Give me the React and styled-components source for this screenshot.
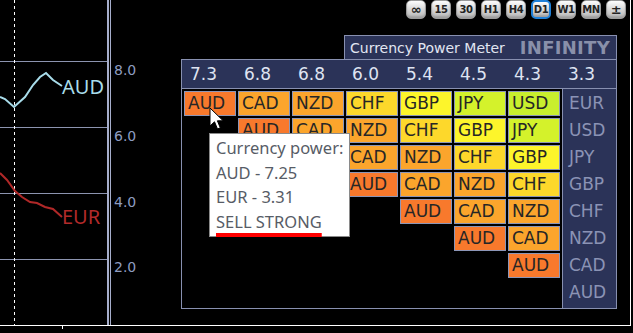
import React from "react";
import styled, { createGlobalStyle } from "styled-components";

const GlobalStyle = createGlobalStyle`
  html, body {
    margin: 0;
    padding: 0;
    background: #000;
  }
  #root {
    width: 633px;
    height: 333px;
  }
`;

const columns = ["7.3", "6.8", "6.8", "6.0", "5.4", "4.5", "4.3", "3.3"];
const rowLabels = ["EUR", "USD", "JPY", "GBP", "CHF", "NZD", "CAD", "AUD"];
const diagonal = ["AUD", "CAD", "NZD", "CHF", "GBP", "JPY", "USD"];
const cellColors = {
    AUD: "#f8792c",
    CAD: "#fba52c",
    NZD: "#fba52c",
    CHF: "#fdd82b",
    GBP: "#fdf52b",
    JPY: "#d4f22b",
    USD: "#c9ef2e",
};
const timeframes = ["∞", "15", "30", "H1", "H4", "D1", "W1", "MN", "±"];
const ticks = ["8.0", "6.0", "4.0", "2.0"];

function App() {
    return (
        <Root>
            <GlobalStyle />
            <Frame>
                <ChartPane>
                    <svg width="107" height="325">
                        {[61, 127, 193, 259].map((y) => (
                            <line key={y} x1="0" y1={y + 0.5} x2="107" y2={y + 0.5} stroke="#8c94b0" strokeWidth="1" />
                        ))}
                        <line x1="14.5" y1="0" x2="14.5" y2="325" stroke="#fff" strokeWidth="1" strokeDasharray="3 3" />
                        <polyline
                            points="0,97 5,99 14,107 25,97 33,85 40,77 46,73 53,80 62,86"
                            fill="none"
                            stroke="#a8dcea"
                            strokeWidth="2"
                        />
                        <polyline
                            points="0,173 7,180 15,191 22,197 30,202 37,203 45,207 53,209 62,217"
                            fill="none"
                            stroke="#b02828"
                            strokeWidth="2"
                        />
                    </svg>
                    <SeriesLabel $top={74} $color="#a8dcea">AUD</SeriesLabel>
                    <SeriesLabel $top={204} $color="#b22a2a">EUR</SeriesLabel>
                </ChartPane>
                <AxisRule />
                <AxisScale>
                    {ticks.map((t) => (
                        <Tick key={t}>{t}</Tick>
                    ))}
                </AxisScale>
                <MeterArea>
                    <TitleBar>
                        <span>Currency Power Meter</span>
                        <Brand>INFINITY</Brand>
                    </TitleBar>
                    <Panel>
                        <HeaderRow>
                            {columns.map((v, i) => (
                                <HeaderCell key={i}>{v}</HeaderCell>
                            ))}
                        </HeaderRow>
                        <Body>
                            <CellGrid>
                                {rowLabels.map((row, r) =>
                                    diagonal.map((_, c) => {
                                        const name = c >= r ? diagonal[c - r] : null;
                                        return name ? (
                                            <Cell key={`${r}-${c}`} $bg={cellColors[name]}>
                                                {name}
                                            </Cell>
                                        ) : (
                                            <EmptyCell key={`${r}-${c}`} />
                                        );
                                    })
                                )}
                            </CellGrid>
                            <LabelColumn>
                                {rowLabels.map((l) => (
                                    <RowLabel key={l}>{l}</RowLabel>
                                ))}
                            </LabelColumn>
                        </Body>
                    </Panel>
                </MeterArea>
            </Frame>
            <BottomTick />

            <Toolbar>
                {timeframes.map((t) => (
                    <TfButton key={t} $active={t === "D1"} $glyph={t === "∞" || t === "±"}>
                        {t}
                    </TfButton>
                ))}
            </Toolbar>

            <Tooltip>
                <TipLine>Currency power:</TipLine>
                <TipLine>AUD - 7.25</TipLine>
                <TipLine>EUR - 3.31</TipLine>
                <TipLine>
                    <Signal>SELL STRONG</Signal>
                </TipLine>
            </Tooltip>

            <Cursor width="16" height="24" viewBox="0 0 16 24">
                <path
                    d="M1,1 L1,19 L5.5,14.8 L8.5,22 L11.3,20.8 L8.4,13.8 L14.2,13.8 Z"
                    fill="#fff"
                    stroke="#000"
                    strokeWidth="1"
                />
            </Cursor>
        </Root>
    );
}

const Root = styled.div`
    position: relative;
    width: 633px;
    height: 333px;
    background: #000;
    overflow: hidden;
    font-family: "DejaVu Sans", Verdana, sans-serif;
`;

const Frame = styled.div`
    display: flex;
    width: 630px;
    height: 325px;
    border-right: 1px solid #fff;
    border-bottom: 1px solid #fff;
`;

const ChartPane = styled.div`
    position: relative;
    width: 107px;
    flex-shrink: 0;
    svg {
        display: block;
    }
`;

const SeriesLabel = styled.div`
    position: absolute;
    left: 62px;
    top: ${(p) => p.$top}px;
    font-family: "Noto Sans", sans-serif;
    font-size: 20px;
    line-height: 26px;
    color: ${(p) => p.$color};
`;

const AxisRule = styled.div`
    width: 1px;
    flex-shrink: 0;
    border-left: 2px solid #a6aecb;
    border-right: 1px solid #a6aecb;
`;

const AxisScale = styled.div`
    width: 70px;
    flex-shrink: 0;
    display: flex;
    flex-direction: column;
    padding-top: 62px;
    padding-left: 3px;
    box-sizing: border-box;
`;

const Tick = styled.div`
    height: 66px;
    font-size: 14px;
    line-height: 16px;
    color: #8e9cc0;
`;

const MeterArea = styled.div`
    display: flex;
    flex-direction: column;
    padding-top: 35px;
`;

const TitleBar = styled.div`
    align-self: flex-end;
    width: 273px;
    height: 24px;
    box-sizing: border-box;
    display: flex;
    align-items: center;
    justify-content: space-between;
    padding: 0 6px 0 5px;
    background: #2b3358;
    border: 1px solid #8890b0;
    border-bottom: none;
    color: #e2e6f2;
    font-size: 14px;
`;

const Brand = styled.span`
    font-size: 18px;
    font-weight: bold;
    color: #8990aa;
    letter-spacing: 0.3px;
`;

const Panel = styled.div`
    border: 1px solid #8890b0;
    width: 434px;
`;

const HeaderRow = styled.div`
    display: grid;
    grid-template-columns: repeat(8, 54px);
    height: 28px;
    align-items: center;
    padding-left: 2px;
    background: #2b3358;
    border-bottom: 1px solid #8890b0;
`;

const HeaderCell = styled.div`
    padding-left: 6px;
    font-size: 17px;
    color: #dfe4f2;
`;

const Body = styled.div`
    display: flex;
`;

const CellGrid = styled.div`
    display: grid;
    grid-template-columns: repeat(7, 52px);
    grid-auto-rows: 25px;
    gap: 2px;
    padding: 2px 2px 3px;
`;

const Cell = styled.div`
    box-sizing: border-box;
    border: 1px solid #8c96b8;
    background: ${(p) => p.$bg};
    color: #262626;
    font-size: 17px;
    line-height: 23px;
    padding-left: 3px;
`;

const EmptyCell = styled.div``;

const LabelColumn = styled.div`
    flex: 1;
    display: grid;
    grid-auto-rows: 25px;
    gap: 2px;
    padding-top: 2px;
    background: #2b3358;
    border-left: 1px solid #8890b0;
`;

const RowLabel = styled.div`
    padding-left: 6px;
    font-size: 17px;
    line-height: 25px;
    color: #8b93b5;
`;

const BottomTick = styled.div`
    margin-left: 62px;
    width: 1px;
    height: 3px;
    background: #fff;
`;

const Toolbar = styled.div`
    position: absolute;
    top: 0;
    left: 406px;
    display: flex;
    gap: 5px;
`;

const TfButton = styled.div`
    width: 20px;
    height: 19px;
    box-sizing: border-box;
    display: flex;
    align-items: center;
    justify-content: center;
    border-radius: 5px;
    border: ${(p) => (p.$active ? "2px solid #1e80d8" : "1px solid #9a9a9a")};
    background: linear-gradient(#fdfdfd, #d0d0d0 60%, #b8b8b8);
    box-shadow: inset 0 -2px 2px rgba(0, 0, 0, 0.15);
    font-size: ${(p) => (p.$glyph ? "13px" : "10px")};
    font-weight: bold;
    letter-spacing: -0.5px;
    color: #222;
`;

const Tooltip = styled.div`
    position: absolute;
    left: 209px;
    top: 133px;
    width: 141px;
    height: 104px;
    box-sizing: border-box;
    padding: 2px 0 0 6px;
    background: #fff;
    border: 1px solid #8a8a8a;
    font-family: "Noto Sans", sans-serif;
    font-size: 16.5px;
    color: #575c66;
`;

const TipLine = styled.div`
    height: 24.5px;
    line-height: 24px;
    white-space: nowrap;
`;

const Signal = styled.span`
    text-decoration: underline;
    text-decoration-color: #ff0000;
    text-decoration-thickness: 4px;
    text-underline-offset: 5px;
`;

const Cursor = styled.svg`
    position: absolute;
    left: 209px;
    top: 107px;
`;

export default App;
